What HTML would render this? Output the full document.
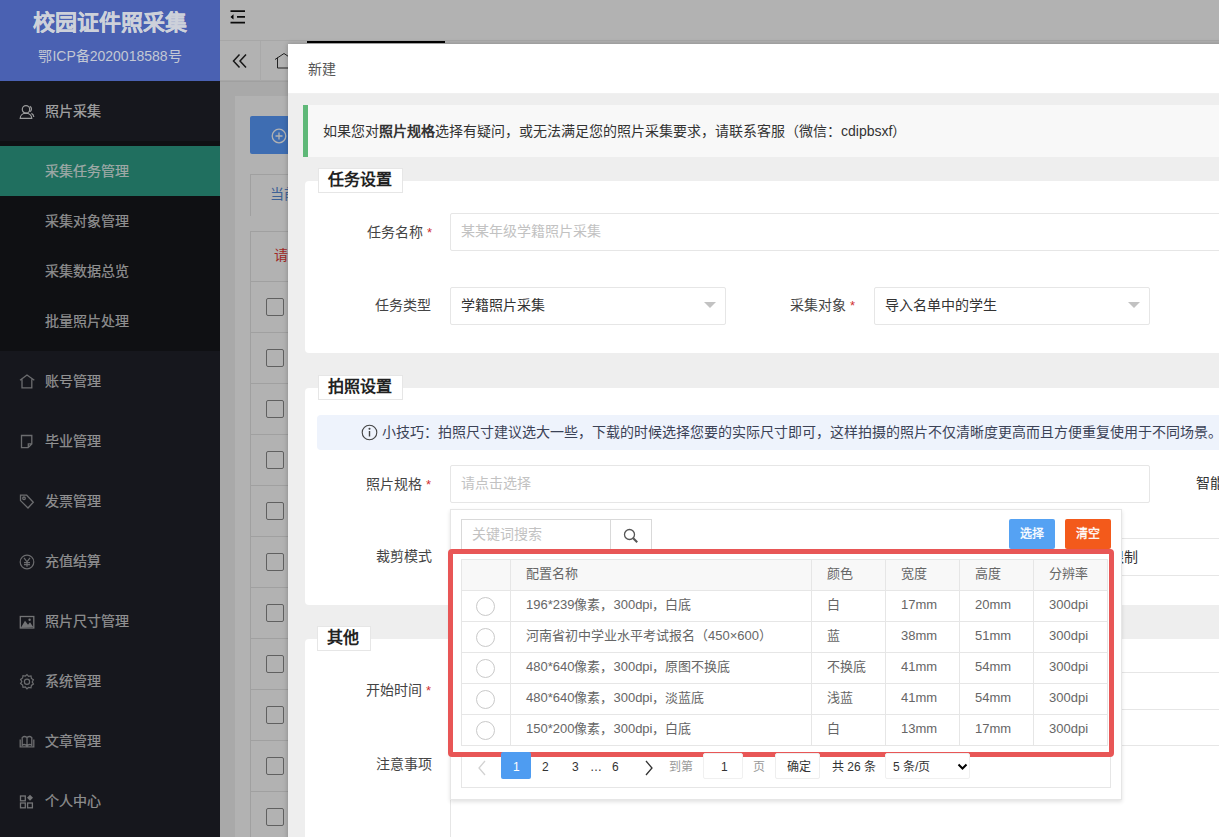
<!DOCTYPE html>
<html lang="zh-CN"><head><meta charset="utf-8">
<style>
*{margin:0;padding:0;box-sizing:border-box}
html,body{width:1219px;height:837px;overflow:hidden;font-family:"Liberation Sans",sans-serif;font-size:14px;color:#333;background:#f2f2f2}
.a{position:absolute}
.t{position:absolute;white-space:nowrap;line-height:1}
/* background page */
#side{left:0;top:0;width:220px;height:837px;background:#20222a}
#logo{left:0;top:0;width:220px;height:81px;background:#6a8cff}
#sub{left:0;top:141px;width:220px;height:210px;background:#16171c}
#sel{left:0;top:146px;width:220px;height:50px;background:#2e9f88}
.mi{color:rgba(255,255,255,.75);font-size:14px;-webkit-text-stroke:0.2px currentColor}
#hdr{left:220px;top:0;width:999px;height:41px;background:#fff}
#tabs{left:220px;top:41px;width:999px;height:40px;background:#fff;border-bottom:1px solid #f0f0f0}
#shade{left:0;top:0;width:1219px;height:837px;background:rgba(0,0,0,.3)}
/* modal */
#modal{left:288px;top:44px;width:1000px;height:900px;background:#eee;box-shadow:0 0 5px rgba(0,0,0,.25)}
#mh{left:0;top:0;width:1000px;height:50px;background:#fff;border-bottom:1px solid #f0f0f0}
.card{position:absolute;background:#fff;border-radius:4px}
.legend{position:absolute;background:#fff;border:1px solid #e6e6e6;font-weight:bold;font-size:16px;color:#222}
.lbl{position:absolute;white-space:nowrap;line-height:1;font-size:14px;color:#444;text-align:right}
.req{color:#d03030;-webkit-text-stroke:0;font-size:13px}
.inp{position:absolute;background:#fff;border:1px solid #e6e6e6;border-radius:2px}
.ph{color:#c2c2c2}
.arrow{position:absolute;width:0;height:0;border-left:6px solid transparent;border-right:6px solid transparent;border-top:6px solid #c2c2c2}
.td{font-size:13px;color:#666}
.radio{width:19px;height:19px;border:1.5px solid #c9c9c9;border-radius:50%}
.btn{color:#fff;font-size:12px;text-align:center;line-height:31px;border-radius:2px;-webkit-text-stroke:0.3px currentColor}
.pg{font-size:12px;color:#333}
b,.bold{-webkit-text-stroke:0}
</style></head><body>
<!-- sidebar -->
<div id="side" class="a"></div>
<div id="logo" class="a"></div>
<div id="sub" class="a"></div>
<div id="sel" class="a"></div>
<div class="t mi" style="left:45px;top:104px;color:rgba(255,255,255,.9)">照片采集</div>
<div class="t mi" style="left:45px;top:164px;color:rgba(255,255,255,.86)">采集任务管理</div>
<div class="t mi" style="left:45px;top:214px">采集对象管理</div>
<div class="t mi" style="left:45px;top:264px">采集数据总览</div>
<div class="t mi" style="left:45px;top:314px">批量照片处理</div>
<div class="t mi" style="left:45px;top:374px">账号管理</div>
<div class="t mi" style="left:45px;top:434px">毕业管理</div>
<div class="t mi" style="left:45px;top:494px">发票管理</div>
<div class="t mi" style="left:45px;top:554px">充值结算</div>
<div class="t mi" style="left:45px;top:614px">照片尺寸管理</div>
<div class="t mi" style="left:45px;top:674px">系统管理</div>
<div class="t mi" style="left:45px;top:734px">文章管理</div>
<div class="t mi" style="left:45px;top:794px">个人中心</div>

<!-- side icons -->
<svg class="a" style="left:19px;top:101px" width="16" height="18" viewBox="0 0 16 18" fill="none" stroke="rgba(255,255,255,.85)" stroke-width="1.2"><circle cx="7" cy="8.4" r="3.7"/><path d="M1.2 17.4c0-3.2 2.6-5.2 5.8-5.2s5.8 2 5.8 5.2z"/><path d="M10.8 5.4a3 3 0 0 1 0 5.4M12.4 12.4c1.5.7 2.4 2 2.4 3.6"/></svg>
<svg class="a" style="left:19px;top:374px" width="17" height="15" viewBox="0 0 17 15" fill="none" stroke="rgba(255,255,255,.55)" stroke-width="1.3"><path d="M1 6.3L8 1l7.3 5.3M3 5.2v8.7h9.8V5.2"/></svg>
<svg class="a" style="left:20px;top:434px" width="14" height="15" viewBox="0 0 14 15" fill="none" stroke="rgba(255,255,255,.55)" stroke-width="1.3"><path d="M1.5 1.5h10.3v8.5l-3.7 3.7H1.5z M8.3 13.5v-3.6h3.5"/></svg>
<svg class="a" style="left:19px;top:493px" width="16" height="17" viewBox="0 0 16 17" fill="none" stroke="rgba(255,255,255,.55)" stroke-width="1.3"><path d="M1.5 2.2h6.2l6.6 7.1-5.3 5.7-7.5-7.4z"/><circle cx="5" cy="5.3" r="1.3"/></svg>
<svg class="a" style="left:19px;top:554px" width="16" height="16" viewBox="0 0 16 16" fill="none" stroke="rgba(255,255,255,.55)" stroke-width="1.2"><circle cx="8" cy="8" r="6.8"/><path d="M5 3.8l3 4 3-4M8 7.8v5M5 8.6h6M5 10.7h6"/></svg>
<svg class="a" style="left:19px;top:615px" width="16" height="14" viewBox="0 0 16 14" fill="none" stroke="rgba(255,255,255,.6)" stroke-width="1.3"><rect x="1.3" y="1.5" width="13.5" height="11.5"/><path d="M2 12.5L6 5.8l3 4 2-2.6 3.2 4.8z" fill="rgba(255,255,255,.6)" stroke="none"/><circle cx="10.6" cy="4.8" r="1.2" fill="rgba(255,255,255,.6)" stroke="none"/></svg>
<svg class="a" style="left:19px;top:673px" width="16" height="17" viewBox="0 0 16 17" fill="none" stroke="rgba(255,255,255,.55)" stroke-width="1.2"><path d="M8 1.6l1.6 1.8 2.4-.4.4 2.4 2 1.4-1.2 2.1 1.2 2.1-2 1.4-.4 2.4-2.4-.4L8 15.8l-1.6-1.8-2.4.4-.4-2.4-2-1.4 1.2-2.1-1.2-2.1 2-1.4.4-2.4 2.4.4z"/><circle cx="8" cy="8.7" r="2.6"/></svg>
<svg class="a" style="left:19px;top:735px" width="16" height="13" viewBox="0 0 16 13" fill="none" stroke="rgba(255,255,255,.55)" stroke-width="1.3"><path d="M3.2 11V2.6C4.5 1.3 6.5 1.3 8 2.6c1.5-1.3 3.5-1.3 4.8 0V11M8 2.6V11M1.2 4.5V11.8H14.8V4.5M3.2 10c1.6-.8 3.4-.8 4.8 1 1.4-1.8 3.2-1.8 4.8-1"/></svg>
<svg class="a" style="left:19px;top:794px" width="16" height="15" viewBox="0 0 16 15" fill="none" stroke="rgba(255,255,255,.6)" stroke-width="1.3"><rect x="1.5" y="2" width="4.8" height="4.8"/><rect x="1.5" y="9" width="4.8" height="4.8"/><rect x="8.6" y="9" width="4.8" height="4.8"/><path d="M11 .8l3 3-3 3-3-3z" fill="rgba(255,255,255,.6)" stroke="none"/></svg>
<!-- header -->
<div id="hdr" class="a"></div>
<div id="tabs" class="a"></div>
<!-- content bg -->
<div class="a" style="left:235px;top:96px;width:1000px;height:800px;background:#fff"></div>

<!-- header icons -->
<svg class="a" style="left:229px;top:9px" width="18" height="16" viewBox="0 0 18 16"><path d="M1.5 2.2h14.5M8 7.9h8M1.5 13.6h14.5" stroke="#111" stroke-width="1.7"/><path d="M1.5 7.9l3-2.6v5.2z" fill="#000"/></svg>
<div class="a" style="left:220px;top:40px;width:999px;height:1px;background:#f0f0f0"></div>
<svg class="a" style="left:232px;top:53px" width="16" height="16" viewBox="0 0 16 16" fill="none" stroke="#222" stroke-width="1.5"><path d="M7.5 1.5L1.5 8l6 6.5M14 1.5L8 8l6 6.5"/></svg>
<div class="a" style="left:260px;top:41px;width:1px;height:40px;background:#f2f2f2"></div>
<svg class="a" style="left:274px;top:52px" width="20" height="17" viewBox="0 0 20 17" fill="none" stroke="#333" stroke-width="1"><path d="M1 7.5L10 1.5l9 6M3.5 5.5v10.5h13V5.5"/></svg>
<div class="a" style="left:307px;top:41px;width:138px;height:2px;background:#000"></div>
<div class="a" style="left:220px;top:81px;width:999px;height:1px;background:#e6e6e6"></div>
<!-- content -->
<div class="a" style="left:250px;top:116px;width:100px;height:38px;background:#5a9cff;border-radius:2px"></div>
<svg class="a" style="left:271px;top:128px" width="16" height="16" viewBox="0 0 16 16" fill="none" stroke="#fff" stroke-width="1.3"><circle cx="8" cy="8" r="6.8"/><path d="M8 4.5v7M4.5 8h7"/></svg>
<div class="a" style="left:250px;top:174px;width:200px;height:42px;border:1px solid #e6e6e6;border-right:none;border-bottom:none"></div>
<div class="t" style="left:270px;top:187px;color:#5a8bd6;font-size:14px">当前</div>
<div class="a" style="left:250px;top:231px;width:300px;height:700px;border-left:1px solid #e6e6e6;border-top:1px solid #e6e6e6"></div>
<div class="t" style="left:274px;top:248px;color:#e53935;font-size:14px">请</div>
<div class="a" style="left:250px;top:281px;width:100px;height:1px;background:#e6e6e6"></div>
<div class="a" style="left:266px;top:298px;width:18px;height:18px;border:1px solid #8a8a8a;border-radius:2px;background:#fff"></div>
<div class="a" style="left:250px;top:332px;width:100px;height:1px;background:#e6e6e6"></div>
<div class="a" style="left:266px;top:349px;width:18px;height:18px;border:1px solid #8a8a8a;border-radius:2px;background:#fff"></div>
<div class="a" style="left:250px;top:383px;width:100px;height:1px;background:#e6e6e6"></div>
<div class="a" style="left:266px;top:400px;width:18px;height:18px;border:1px solid #8a8a8a;border-radius:2px;background:#fff"></div>
<div class="a" style="left:250px;top:434px;width:100px;height:1px;background:#e6e6e6"></div>
<div class="a" style="left:266px;top:451px;width:18px;height:18px;border:1px solid #8a8a8a;border-radius:2px;background:#fff"></div>
<div class="a" style="left:250px;top:485px;width:100px;height:1px;background:#e6e6e6"></div>
<div class="a" style="left:266px;top:502px;width:18px;height:18px;border:1px solid #8a8a8a;border-radius:2px;background:#fff"></div>
<div class="a" style="left:250px;top:536px;width:100px;height:1px;background:#e6e6e6"></div>
<div class="a" style="left:266px;top:553px;width:18px;height:18px;border:1px solid #8a8a8a;border-radius:2px;background:#fff"></div>
<div class="a" style="left:250px;top:587px;width:100px;height:1px;background:#e6e6e6"></div>
<div class="a" style="left:266px;top:604px;width:18px;height:18px;border:1px solid #8a8a8a;border-radius:2px;background:#fff"></div>
<div class="a" style="left:250px;top:638px;width:100px;height:1px;background:#e6e6e6"></div>
<div class="a" style="left:266px;top:655px;width:18px;height:18px;border:1px solid #8a8a8a;border-radius:2px;background:#fff"></div>
<div class="a" style="left:250px;top:689px;width:100px;height:1px;background:#e6e6e6"></div>
<div class="a" style="left:266px;top:706px;width:18px;height:18px;border:1px solid #8a8a8a;border-radius:2px;background:#fff"></div>
<div class="a" style="left:250px;top:740px;width:100px;height:1px;background:#e6e6e6"></div>
<div class="a" style="left:266px;top:757px;width:18px;height:18px;border:1px solid #8a8a8a;border-radius:2px;background:#fff"></div>
<div class="a" style="left:250px;top:791px;width:100px;height:1px;background:#e6e6e6"></div>
<div class="a" style="left:266px;top:808px;width:18px;height:18px;border:1px solid #8a8a8a;border-radius:2px;background:#fff"></div>
<div class="a" style="left:250px;top:842px;width:100px;height:1px;background:#e6e6e6"></div>
<div class="a" style="left:266px;top:859px;width:18px;height:18px;border:1px solid #8a8a8a;border-radius:2px;background:#fff"></div>
<div id="shade" class="a"></div>
<div class="t" style="left:0;top:12px;width:220px;text-align:center;font-size:22px;font-weight:bold;color:#cdd1da;-webkit-text-stroke:0.1px currentColor">校园证件照采集</div>
<div class="t" style="left:0;top:49px;width:220px;text-align:center;font-size:14px;color:#c3c8d4">鄂ICP备2020018588号</div>

<!-- modal -->
<div id="modal" class="a">
 <div id="mh" class="a"></div>
 <div class="t" style="left:20px;top:18px;font-size:14px;color:#555">新建</div>
 <div class="a" style="left:15px;top:61px;width:1000px;height:52px;background:#f8f8f8;border-left:5px solid #5fb878"></div>
 <div class="t" style="left:35px;top:80px">如果您对<b>照片规格</b>选择有疑问，或无法满足您的照片采集要求，请联系客服（微信：cdipbsxf）</div>

 <div class="card" style="left:17px;top:137px;width:1000px;height:172px"></div>
 <div class="legend" style="left:30px;top:124px;width:85px;height:25px"></div>
 <div class="t" style="left:40px;top:128px;font-size:16px;font-weight:bold;color:#222;-webkit-text-stroke:0">任务设置</div>
 <div class="lbl" style="left:79px;top:181px">任务名称 <span class="req">*</span></div>
 <div class="inp" style="left:162px;top:169px;width:1000px;height:38px"></div>
 <div class="t ph" style="left:173px;top:180px">某某年级学籍照片采集</div>
 <div class="lbl" style="left:87px;top:254px">任务类型</div>
 <div class="inp" style="left:162px;top:243px;width:276px;height:38px"></div>
 <div class="t" style="left:173px;top:254px">学籍照片采集</div>
 <div class="arrow" style="left:416px;top:258px"></div>
 <div class="lbl" style="left:502px;top:254px">采集对象 <span class="req">*</span></div>
 <div class="inp" style="left:586px;top:243px;width:276px;height:38px"></div>
 <div class="t" style="left:597px;top:254px">导入名单中的学生</div>
 <div class="arrow" style="left:840px;top:258px"></div>

 <div class="card" style="left:17px;top:344px;width:1000px;height:217px"></div>
 <div class="legend" style="left:30px;top:331px;width:85px;height:25px"></div>
 <div class="t" style="left:40px;top:335px;font-size:16px;font-weight:bold;color:#222;-webkit-text-stroke:0">拍照设置</div>
 <div class="a" style="left:29px;top:371px;width:1000px;height:35px;background:#eef3fc;border-radius:4px"></div>
 <svg class="a" style="left:73px;top:380px" width="17" height="17" viewBox="0 0 17 17" fill="none" stroke="#444" stroke-width="1.1"><circle cx="8.5" cy="8.5" r="7.3"/><path d="M8.5 7v5.5" stroke-width="1.4"/><circle cx="8.5" cy="4.8" r=".5" fill="#444"/></svg>
 <div class="t" style="left:94px;top:381px;color:#3b4256">小技巧：拍照尺寸建议选大一些，下载的时候选择您要的实际尺寸即可，这样拍摄的照片不仅清晰度更高而且方便重复使用于不同场景。</div>
 <div class="lbl" style="left:78px;top:433px">照片规格 <span class="req">*</span></div>
 <div class="inp" style="left:162px;top:421px;width:700px;height:38px"></div>
 <div class="t ph" style="left:173px;top:432px">请点击选择</div>
 <div class="t" style="left:908px;top:432px">智能裁剪</div>
 <div class="lbl" style="left:88px;top:505px">裁剪模式</div>
 <div class="inp" style="left:162px;top:494px;width:1000px;height:38px"></div>
 <div class="t" style="left:808px;top:506px">不限制</div>

 <div class="card" style="left:17px;top:595px;width:1000px;height:400px"></div>
 <div class="legend" style="left:29px;top:582px;width:54px;height:25px"></div>
 <div class="t" style="left:39px;top:586px;font-size:16px;font-weight:bold;color:#222;-webkit-text-stroke:0">其他</div>
 <div class="lbl" style="left:78px;top:639px">开始时间 <span class="req">*</span></div>
 <div class="inp" style="left:162px;top:628px;width:1000px;height:38px"></div>
 <div class="lbl" style="left:88px;top:713px">注意事项</div>
 <div class="inp" style="left:162px;top:701px;width:1000px;height:300px"></div>

 <!-- dropdown -->
 <div class="a" style="left:162px;top:465px;width:672px;height:291px;background:#fff;border:1px solid #e6e6e6;box-shadow:0 2px 4px rgba(0,0,0,.12)"></div>
 <div class="inp" style="left:173px;top:475px;width:150px;height:31px;border-color:#d9d9d9;border-radius:0"></div>
 <div class="t ph" style="left:184px;top:483px">关键词搜索</div>
 <div class="inp" style="left:322px;top:475px;width:42px;height:31px;border-color:#d9d9d9;border-radius:0"></div>
 <svg class="a" style="left:334px;top:483px" width="18" height="18" viewBox="0 0 18 18"><circle cx="7.5" cy="7.5" r="5" fill="none" stroke="#555" stroke-width="1.3"/><path d="M11.2 11.2l4 4" stroke="#555" stroke-width="2"/></svg>
 <div class="a btn" style="left:721px;top:475px;width:46px;height:30px;background:#55a2f3">选择</div>
 <div class="a btn" style="left:777px;top:475px;width:46px;height:30px;background:#f35a1b">清空</div>
 <div class="a" style="left:173px;top:515px;width:647px;height:31px;background:#f8f8f8"></div>
 <div class="a" style="left:173px;top:515px;width:1px;height:186px;background:#e6e6e6"></div>
 <div class="a" style="left:222px;top:515px;width:1px;height:186px;background:#e6e6e6"></div>
 <div class="a" style="left:523px;top:515px;width:1px;height:186px;background:#e6e6e6"></div>
 <div class="a" style="left:597px;top:515px;width:1px;height:186px;background:#e6e6e6"></div>
 <div class="a" style="left:671px;top:515px;width:1px;height:186px;background:#e6e6e6"></div>
 <div class="a" style="left:745px;top:515px;width:1px;height:186px;background:#e6e6e6"></div>
 <div class="a" style="left:819px;top:515px;width:1px;height:187px;background:#e6e6e6"></div>
 <div class="a" style="left:173px;top:515px;width:647px;height:1px;background:#e6e6e6"></div>
 <div class="a" style="left:173px;top:546px;width:647px;height:1px;background:#e6e6e6"></div>
 <div class="a" style="left:173px;top:577px;width:647px;height:1px;background:#e6e6e6"></div>
 <div class="a" style="left:173px;top:608px;width:647px;height:1px;background:#e6e6e6"></div>
 <div class="a" style="left:173px;top:639px;width:647px;height:1px;background:#e6e6e6"></div>
 <div class="a" style="left:173px;top:670px;width:647px;height:1px;background:#e6e6e6"></div>
 <div class="a" style="left:173px;top:701px;width:647px;height:1px;background:#e6e6e6"></div>
 <div class="t td" style="left:238px;top:523px">配置名称</div>
 <div class="t td" style="left:539px;top:523px">颜色</div>
 <div class="t td" style="left:613px;top:523px">宽度</div>
 <div class="t td" style="left:687px;top:523px">高度</div>
 <div class="t td" style="left:761px;top:523px">分辨率</div>
 <div class="a radio" style="left:188px;top:553px"></div>
 <div class="t td" style="left:238px;top:554px">196*239像素，300dpi，白底</div>
 <div class="t td" style="left:539px;top:554px">白</div>
 <div class="t td" style="left:613px;top:554px">17mm</div>
 <div class="t td" style="left:687px;top:554px">20mm</div>
 <div class="t td" style="left:761px;top:554px">300dpi</div>
 <div class="a radio" style="left:188px;top:584px"></div>
 <div class="t td" style="left:238px;top:585px">河南省初中学业水平考试报名（450×600）</div>
 <div class="t td" style="left:539px;top:585px">蓝</div>
 <div class="t td" style="left:613px;top:585px">38mm</div>
 <div class="t td" style="left:687px;top:585px">51mm</div>
 <div class="t td" style="left:761px;top:585px">300dpi</div>
 <div class="a radio" style="left:188px;top:615px"></div>
 <div class="t td" style="left:238px;top:616px">480*640像素，300dpi，原图不换底</div>
 <div class="t td" style="left:539px;top:616px">不换底</div>
 <div class="t td" style="left:613px;top:616px">41mm</div>
 <div class="t td" style="left:687px;top:616px">54mm</div>
 <div class="t td" style="left:761px;top:616px">300dpi</div>
 <div class="a radio" style="left:188px;top:646px"></div>
 <div class="t td" style="left:238px;top:647px">480*640像素，300dpi，淡蓝底</div>
 <div class="t td" style="left:539px;top:647px">浅蓝</div>
 <div class="t td" style="left:613px;top:647px">41mm</div>
 <div class="t td" style="left:687px;top:647px">54mm</div>
 <div class="t td" style="left:761px;top:647px">300dpi</div>
 <div class="a radio" style="left:188px;top:677px"></div>
 <div class="t td" style="left:238px;top:678px">150*200像素，300dpi，白底</div>
 <div class="t td" style="left:539px;top:678px">白</div>
 <div class="t td" style="left:613px;top:678px">13mm</div>
 <div class="t td" style="left:687px;top:678px">17mm</div>
 <div class="t td" style="left:761px;top:678px">300dpi</div>

 <div class="a" style="left:160px;top:505px;width:666px;height:208px;border:5px solid #e85656;border-radius:4px"></div>
 <!-- pagination -->
 <div class="a" style="left:173px;top:713px;width:650px;height:31px;border:1px solid #e6e6e6;border-top:none"></div>
 <svg class="a" style="left:188px;top:716px" width="12" height="16" viewBox="0 0 12 16"><path d="M9 1L3 8l6 7" fill="none" stroke="#d2d2d2" stroke-width="1.3"/></svg>
 <div class="a" style="left:213px;top:708px;width:30px;height:27px;background:#4e9cf1;border-radius:2px"></div>
 <div class="t pg" style="left:225px;top:717px;color:#fff">1</div>
 <div class="t pg" style="left:254px;top:717px">2</div>
 <div class="t pg" style="left:284px;top:717px">3</div>
 <div class="t pg" style="left:302px;top:717px">…</div>
 <div class="t pg" style="left:324px;top:717px">6</div>
 <svg class="a" style="left:355px;top:716px" width="12" height="16" viewBox="0 0 12 16"><path d="M3 1l6 7-6 7" fill="none" stroke="#333" stroke-width="1.3"/></svg>
 <div class="t pg" style="left:381px;top:717px;color:#999">到第</div>
 <div class="inp" style="left:415px;top:709px;width:40px;height:26px;border-color:#f0f0f0"></div>
 <div class="t pg" style="left:433px;top:717px">1</div>
 <div class="t pg" style="left:465px;top:717px;color:#999">页</div>
 <div class="inp" style="left:487px;top:709px;width:45px;height:26px;border-color:#eee"></div>
 <div class="t pg" style="left:499px;top:717px">确定</div>
 <div class="t pg" style="left:544px;top:717px">共 26 条</div>
 <div class="inp" style="left:597px;top:709px;width:85px;height:26px;border-color:#f0f0f0"></div>
 <div class="t pg" style="left:605px;top:717px">5 条/页</div>
 <svg class="a" style="left:669px;top:718px" width="11" height="9" viewBox="0 0 11 9"><path d="M1.5 2.5l4 4 4-4" fill="none" stroke="#000" stroke-width="2"/></svg>
</div>
</body></html>
